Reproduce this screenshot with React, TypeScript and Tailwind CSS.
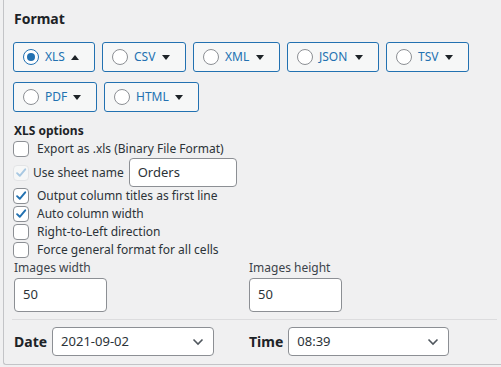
import React from "react";

const FONT = { fontFamily: '"Noto Sans", "Open Sans", Arial, sans-serif' };

const Radio = ({ on }: { on?: boolean }) => (
  <span
    className={
      "flex items-center justify-center w-4 h-4 rounded-full bg-white border shrink-0 " +
      (on ? "border-[#2271b1] border-[1.5px]" : "border-[#8c8f94]")
    }
  >
    {on && <span className="w-2 h-2 rounded-full bg-[#2271b1]" />}
  </span>
);

const Caret = ({ up }: { up?: boolean }) => (
  <svg width="8" height="5" viewBox="0 0 8 5" className="shrink-0 ml-auto">
    {up ? <path d="M0 5 L4 0 L8 5 Z" fill="#1d2327" /> : <path d="M0 0 L8 0 L4 5 Z" fill="#1d2327" />}
  </svg>
);

const FormatButton = ({ label, on, w }: { label: string; on?: boolean; w: string }) => (
  <button
    className={
      "flex items-center h-[30px] pl-[9px] pr-[15px] gap-[6px] rounded-[3px] border border-[#2271b1] bg-[#f6f7f7] text-[#2271b1] text-[12px] " +
      w
    }
  >
    <Radio on={on} />
    <span>{label}</span>
    <Caret up={on} />
  </button>
);

const Check = ({ checked, disabled }: { checked?: boolean; disabled?: boolean }) => (
  <span
    className={
      "relative flex items-center justify-center w-4 h-4 rounded-[4px] border shrink-0 " +
      (disabled ? "border-[#e3e4e6] bg-[#f6f7f7]" : "border-[#8c8f94] bg-white")
    }
  >
    {checked && (
      <svg width="14" height="14" viewBox="0 0 16 16" className="absolute">
        <path
          d="M3.5 8.2 L6.6 11.2 L12.8 3.8"
          fill="none"
          stroke={disabled ? "#a8c8e2" : "#2271b1"}
          strokeWidth="2.2"
          strokeLinecap="round"
          strokeLinejoin="round"
        />
      </svg>
    )}
  </span>
);

const CheckRow = ({ label, checked }: { label: string; checked?: boolean }) => (
  <label className="flex items-center h-[18px] gap-2 text-[12px] text-[#2c3338]">
    <Check checked={checked} />
    <span>{label}</span>
  </label>
);

const Chevron = () => (
  <svg width="12" height="8" viewBox="0 0 12 8" className="shrink-0">
    <path d="M1.5 1.5 L6 6 L10.5 1.5" fill="none" stroke="#50575e" strokeWidth="1.6" />
  </svg>
);

const Select = ({ value, width }: { value: string; width: string }) => (
  <div
    className={
      "flex items-center justify-between h-[29px] pl-[8px] pr-[9px] rounded-[4px] border border-[#8c8f94] bg-white text-[13px] text-[#2c3338] " +
      width
    }
  >
    <span>{value}</span>
    <Chevron />
  </div>
);

export default function App() {
  return (
    <div className="w-[501px] h-[367px] bg-[#f0f0f1] overflow-hidden" style={FONT}>
      <div className="ml-[3px] h-[365px] border-l border-b border-[#c3c4c7] rounded-bl-[3px] pl-[9px] pt-[9px]">
        <h3 className="h-5 leading-5 text-[14px] font-bold text-[#1d2327] pl-px">Format</h3>

        <div className="flex flex-wrap w-[460px] gap-x-[7px] gap-y-[10px] mt-[13px]">
          <FormatButton label="XLS" on w="w-[82px]" />
          <FormatButton label="CSV" w="w-[84px]" />
          <FormatButton label="XML" w="w-[87px]" />
          <FormatButton label="JSON" w="w-[92px]" />
          <FormatButton label="TSV" w="w-[83px]" />
          <FormatButton label="PDF" w="w-[84px]" />
          <FormatButton label="HTML" w="w-[95px]" />
        </div>

        <div className="mt-[10px] h-[18px] leading-[18px] text-[12px] font-bold text-[#1d2327] pl-px">XLS options</div>

        <CheckRow label="Export as .xls (Binary File Format)" />
        <label className="flex items-center h-[29px] text-[12px] text-[#2c3338]">
          <Check checked disabled />
          <span className="ml-[4px]">Use sheet name</span>
          <div className="ml-[5px] flex items-center w-[108px] h-[29px] pl-[8px] rounded-[4px] border border-[#8c8f94] bg-white text-[13px]">
            Orders
          </div>
        </label>
        <CheckRow label="Output column titles as first line" checked />
        <CheckRow label="Auto column width" checked />
        <CheckRow label="Right-to-Left direction" />
        <CheckRow label="Force general format for all cells" />

        <div className="grid grid-cols-[235px_1fr] pl-px">
          <div>
            <div className="h-[18px] leading-[18px] text-[12px] text-[#3c434a]">Images width</div>
            <div className="flex items-center w-[93px] h-[34px] mt-px pl-[8px] rounded-[4px] border border-[#8c8f94] bg-white text-[13px] text-[#2c3338]">
              50
            </div>
          </div>
          <div>
            <div className="h-[18px] leading-[18px] text-[12px] text-[#3c434a]">Images height</div>
            <div className="flex items-center w-[93px] h-[34px] mt-px pl-[8px] rounded-[4px] border border-[#8c8f94] bg-white text-[13px] text-[#2c3338]">
              50
            </div>
          </div>
        </div>

        <div className="mt-[7px] -ml-px mr-[4px] border-t border-[#dcdcde]" />

        <div className="grid grid-cols-[235px_1fr] mt-[7px] pl-px">
          <div className="flex items-center gap-[5px]">
            <span className="text-[14px] font-bold text-[#1d2327]">Date</span>
            <Select value="2021-09-02" width="w-[162px]" />
          </div>
          <div className="flex items-center gap-[5px]">
            <span className="text-[14px] font-bold text-[#1d2327]">Time</span>
            <Select value="08:39" width="w-[161px]" />
          </div>
        </div>
      </div>
    </div>
  );
}
